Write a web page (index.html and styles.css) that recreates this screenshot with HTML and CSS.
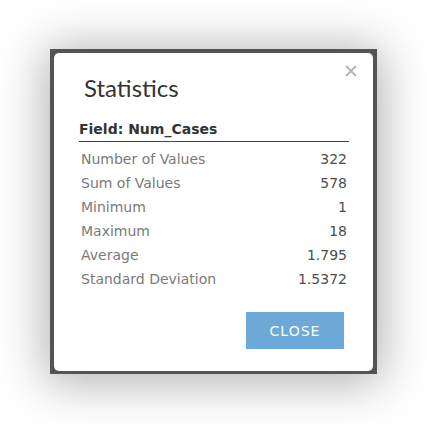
FILE: index.html
```html
<!DOCTYPE html>
<html>
<head>
<meta charset="utf-8">
<link rel="stylesheet" href="styles.css">
</head>
<body>
<div class="stage">
  <div class="dialog">
    <button class="close-x" aria-label="Close">
      <svg width="12" height="12" viewBox="0 0 12 12"><path d="M1 1L11 11M11 1L1 11" stroke="#b5b5b5" stroke-width="2" fill="none"/></svg>
    </button>
    <h1 class="title">Statistics</h1>
    <div class="field">Field: Num_Cases</div>
    <div class="rows">
      <div class="row"><span>Number of Values</span><span class="val">322</span></div>
      <div class="row"><span>Sum of Values</span><span class="val">578</span></div>
      <div class="row"><span>Minimum</span><span class="val">1</span></div>
      <div class="row"><span>Maximum</span><span class="val">18</span></div>
      <div class="row"><span>Average</span><span class="val">1.795</span></div>
      <div class="row"><span>Standard Deviation</span><span class="val">1.5372</span></div>
    </div>
    <div class="actions"><button class="btn">CLOSE</button></div>
  </div>
</div>
</body>
</html>
```
FILE: styles.css
```css
html, body { margin: 0; padding: 0; background: #fff; }
body { width: 427px; height: 424px; overflow: hidden; }
.stage {
  box-sizing: border-box;
  width: 327px;
  height: 325px;
  margin: 49px 0 0 50px;
  background: #545454;
  padding: 4px 4px 3px 4px;
  box-shadow: 0 4px 45px 4px rgba(0,0,0,0.32);
}
.dialog {
  position: relative;
  box-sizing: border-box;
  height: 100%;
  background: #fff;
  border-radius: 5px;
  padding: 21px 24px 0 25px;
  font-family: "DejaVu Sans", Verdana, sans-serif;
}
.close-x {
  position: absolute;
  top: 12px;
  right: 16px;
  width: 12px;
  height: 12px;
  padding: 0;
  border: 0;
  background: none;
  display: block;
}
.close-x svg { display: block; }
.title {
  margin: 0 0 19px 5px;
  font-family: Lato, "Open Sans", sans-serif;
  font-weight: 400;
  font-size: 24px;
  line-height: 28px;
  color: #333;
}
.field {
  font-weight: bold;
  font-size: 14px;
  line-height: 17px;
  color: #333;
  padding-bottom: 3px;
  border-bottom: 1px solid #444;
}
.rows { margin-top: 5px; }
.row {
  display: flex;
  justify-content: space-between;
  padding: 0 2px;
  font-size: 14px;
  line-height: 24px;
  color: #7a7a7a;
}
.row .val { color: #4d4d4d; }
.actions {
  display: flex;
  justify-content: flex-end;
  padding-right: 5px;
  margin-top: 21px;
}
.btn {
  width: 98px;
  height: 37px;
  border: 0;
  background: #6ca9d9;
  color: #fff;
  font-family: "DejaVu Sans", Verdana, sans-serif;
  font-size: 14px;
  letter-spacing: 1px;
  padding: 0;
}
```
